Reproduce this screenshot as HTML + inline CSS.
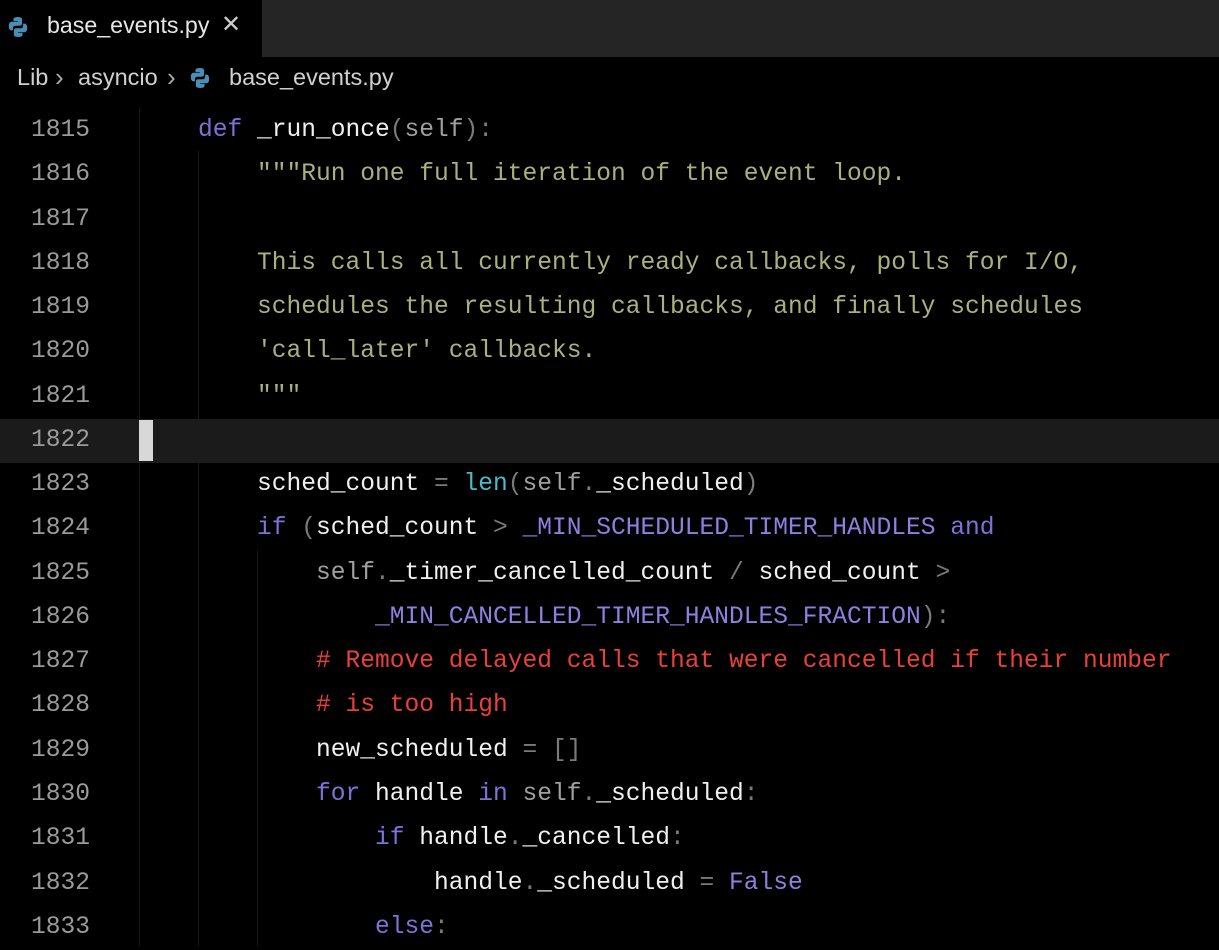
<!DOCTYPE html>
<html><head><meta charset="utf-8"><style>
html,body{margin:0;padding:0;background:#000;width:1219px;height:946px;overflow:hidden}
.tabbar{position:absolute;left:0;top:0;width:1219px;height:57px;background:#252525}
.tab{position:absolute;left:0;top:0;width:262px;height:57px;background:#000}
.ui{font-family:"Liberation Sans",sans-serif;color:#e6e6e6;position:absolute;white-space:nowrap}
.code{position:absolute;left:0;top:109px;width:1219px;font-family:"Liberation Mono",monospace;font-size:24.58px}
.row{position:relative;height:44.28px;line-height:44.28px;white-space:pre}
.ln{position:absolute;left:0;width:90px;text-align:right;color:#9a9a9a}
.tx{position:absolute;left:139px;color:#f0f0f0}
.hl{background:#1b1b1b}
.k{color:#7d72d8}.s{color:#a0a0a0}.d{color:#a8b27c}.c{color:#e8413a}.b{color:#4fb8c9}.p{color:#7a7a7a}.n{color:#8d80e0}
.guide{position:absolute;width:1px;background:#181818}
</style></head><body>
<div class="tabbar"><div class="tab"></div></div>
<svg style="position:absolute;left:6px;top:15px" width="24" height="24" viewBox="0 0 24 24"><path d="M11.8 2c-4.6 0-4.3 2-4.3 2v2.1h4.4v.6H5.7S2.8 6.4 2.8 11s2.6 4.4 2.6 4.4h1.5v-2.1s-.1-2.6 2.5-2.6h4.3s2.4 0 2.4-2.4V4.4S16.5 2 11.8 2z" fill="#4a8db5"/><path d="M12.2 22c4.6 0 4.3-2 4.3-2v-2.1h-4.4v-.6h6.2s2.9.3 2.9-4.3-2.6-4.4-2.6-4.4h-1.5v2.1s.1 2.6-2.5 2.6H10.3s-2.4 0-2.4 2.4v3.9S7.5 22 12.2 22z" fill="#4a8db5"/></svg>
<div class="ui" style="left:47px;top:12px;font-size:23.2px">base_events.py</div>
<div class="ui" style="left:221px;top:10px;font-size:24px;color:#ccc">✕</div>
<div class="ui" style="left:17px;top:64px;font-size:23.5px;color:#d0d0d0">Lib</div>
<div class="ui" style="left:55px;top:62px;font-size:26px;color:#aaa">›</div>
<div class="ui" style="left:78px;top:64px;font-size:23.5px;color:#d0d0d0">asyncio</div>
<div class="ui" style="left:167px;top:62px;font-size:26px;color:#aaa">›</div>
<svg style="position:absolute;left:188px;top:66px" width="24" height="24" viewBox="0 0 24 24"><path d="M11.8 2c-4.6 0-4.3 2-4.3 2v2.1h4.4v.6H5.7S2.8 6.4 2.8 11s2.6 4.4 2.6 4.4h1.5v-2.1s-.1-2.6 2.5-2.6h4.3s2.4 0 2.4-2.4V4.4S16.5 2 11.8 2z" fill="#4a8db5"/><path d="M12.2 22c4.6 0 4.3-2 4.3-2v-2.1h-4.4v-.6h6.2s2.9.3 2.9-4.3-2.6-4.4-2.6-4.4h-1.5v2.1s.1 2.6-2.5 2.6H10.3s-2.4 0-2.4 2.4v3.9S7.5 22 12.2 22z" fill="#4a8db5"/></svg>
<div class="ui" style="left:229px;top:64px;font-size:23.5px;color:#d0d0d0">base_events.py</div>
<div class="guide" style="left:139px;top:107px;height:839px"></div>
<div class="guide" style="left:198px;top:151px;height:795px"></div>
<div class="guide" style="left:257px;top:550px;height:396px"></div>
<div class="code">
<div class="row"><span class="ln">1815</span><span class="tx">    <span class="k">def</span> _run_once<span class="p">(</span><span class="s">self</span><span class="p">):</span></span></div>
<div class="row"><span class="ln">1816</span><span class="tx d">        """Run one full iteration of the event loop.</span></div>
<div class="row"><span class="ln">1817</span><span class="tx"></span></div>
<div class="row"><span class="ln">1818</span><span class="tx d">        This calls all currently ready callbacks, polls for I/O,</span></div>
<div class="row"><span class="ln">1819</span><span class="tx d">        schedules the resulting callbacks, and finally schedules</span></div>
<div class="row"><span class="ln">1820</span><span class="tx d">        'call_later' callbacks.</span></div>
<div class="row"><span class="ln">1821</span><span class="tx d">        """</span></div>
<div class="row hl"><span class="ln">1822</span><span style="position:absolute;left:139px;top:1px;width:14px;height:41px;background:#d8d8d8"></span></div>
<div class="row"><span class="ln">1823</span><span class="tx">        sched_count <span class="p">=</span> <span class="b">len</span><span class="p">(</span><span class="s">self</span><span class="p">.</span>_scheduled<span class="p">)</span></span></div>
<div class="row"><span class="ln">1824</span><span class="tx">        <span class="k">if</span> <span class="p">(</span>sched_count <span class="p">&gt;</span> <span class="n">_MIN_SCHEDULED_TIMER_HANDLES</span> <span class="k">and</span></span></div>
<div class="row"><span class="ln">1825</span><span class="tx">            <span class="s">self</span><span class="p">.</span>_timer_cancelled_count <span class="p">/</span> sched_count <span class="p">&gt;</span></span></div>
<div class="row"><span class="ln">1826</span><span class="tx">                <span class="n">_MIN_CANCELLED_TIMER_HANDLES_FRACTION</span><span class="p">):</span></span></div>
<div class="row"><span class="ln">1827</span><span class="tx c">            # Remove delayed calls that were cancelled if their number</span></div>
<div class="row"><span class="ln">1828</span><span class="tx c">            # is too high</span></div>
<div class="row"><span class="ln">1829</span><span class="tx">            new_scheduled <span class="p">= []</span></span></div>
<div class="row"><span class="ln">1830</span><span class="tx">            <span class="k">for</span> handle <span class="k">in</span> <span class="s">self</span><span class="p">.</span>_scheduled<span class="p">:</span></span></div>
<div class="row"><span class="ln">1831</span><span class="tx">                <span class="k">if</span> handle<span class="p">.</span>_cancelled<span class="p">:</span></span></div>
<div class="row"><span class="ln">1832</span><span class="tx">                    handle<span class="p">.</span>_scheduled <span class="p">=</span> <span class="n">False</span></span></div>
<div class="row"><span class="ln">1833</span><span class="tx">                <span class="k">else</span><span class="p">:</span></span></div>
</div>
</body></html>
